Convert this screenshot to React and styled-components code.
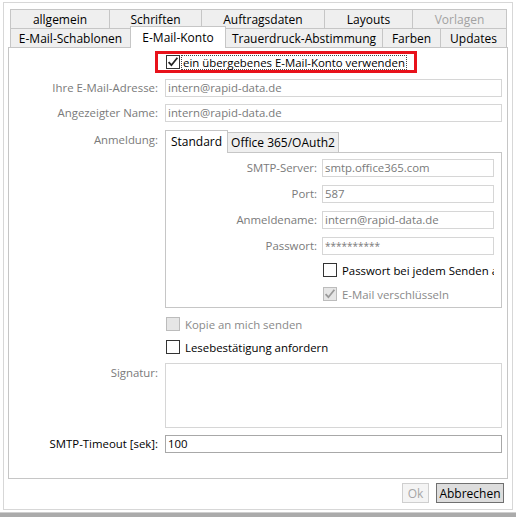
import React from 'react';
import styled, { createGlobalStyle } from 'styled-components';

const Global = createGlobalStyle`
  html, body { margin: 0; padding: 0; background: #fff; }
  body { font-family: "Open Sans", "Noto Sans", sans-serif; font-size: 11.4px; color: #000; }
  #root { width: 516px; height: 517px; }
  * { box-sizing: border-box; }
`;

const Page = styled.div`
  width: 516px;
  height: 517px;
  display: flex;
  flex-direction: column;
  overflow: hidden;
  background: #fff;
`;

const Frame = styled.div`
  margin: 2px 3px 0;
  height: 508px;
  border: 1px solid #d7d7d7;
  padding: 6px 4px 0;
  display: flex;
  flex-direction: column;
`;

const BottomBar = styled.div`
  margin-top: 2px;
  height: 5px;
  background: #ababab;
  border-top: 1px solid #cfcfcf;
`;

const TabHeaders = styled.div`
  padding: 0 1px 0 2px;
  display: flex;
  flex-direction: column;
`;

const TabRow = styled.div`
  display: flex;
  align-items: flex-start;
  height: 19px;
`;

const Tab = styled.div`
  width: ${(p) => p.$w}px;
  height: ${(p) => (p.$selected ? 22 : 19)}px;
  margin-top: ${(p) => (p.$selected ? -2 : 0)}px;
  margin-left: ${(p) => (p.$selected ? -1 : 0)}px;
  border-top: 1px solid #c6c6c6;
  border-right: 1px solid #c6c6c6;
  border-left: ${(p) => (p.$first || p.$selected ? '1px solid #c6c6c6' : 'none')};
  background: ${(p) => (p.$selected ? '#fff' : '#efefef')};
  color: ${(p) => (p.$disabled ? '#a2a2a2' : '#000')};
  position: ${(p) => (p.$selected ? 'relative' : 'static')};
  z-index: ${(p) => (p.$selected ? 1 : 'auto')};
  display: flex;
  align-items: center;
  justify-content: center;
  padding-bottom: ${(p) => (p.$selected ? 1 : 0)}px;
  white-space: nowrap;
  font-size: 12px;
`;

const Panel = styled.div`
  height: 432px;
  border: 1px solid #c6c6c6;
  padding: 0 5px 0 0;
  display: flex;
  flex-direction: column;
`;

const Row = styled.div`
  display: grid;
  grid-template-columns: 149px 1fr;
  column-gap: 7px;
  align-items: ${(p) => (p.$top ? 'start' : 'center')};
  margin-top: ${(p) => p.$mt || 0}px;
`;

const Label = styled.div`
  text-align: right;
  white-space: nowrap;
  color: ${(p) => (p.$dark ? '#000' : '#7a7a7a')};
  padding-top: ${(p) => p.$pt || 0}px;
  line-height: 16px;
`;

const Input = styled.div`
  height: ${(p) => p.$h || 18}px;
  border: 1px solid ${(p) => (p.$active ? '#a8a8a8' : '#d6d6d6')};
  background: #fff;
  color: ${(p) => (p.$active ? '#000' : '#7a7a7a')};
  padding: 0 2px;
  line-height: 16px;
  white-space: nowrap;
  overflow: hidden;
  font-size: ${(p) => (p.$small ? 10 : 11.4)}px;
`;

const Highlight = styled.div`
  justify-self: start;
  margin-left: -10px;
  height: 22px;
  border: 3px solid #e8121b;
  padding: 0 7px 0 8px;
  display: flex;
  align-items: center;
`;

const FocusText = styled.span`
  margin-left: 1px;
  border: 1px dotted #444;
  padding: 0 1px;
  line-height: 13px;
  white-space: nowrap;
`;

const Box = styled.span`
  width: 14px;
  height: 14px;
  flex: none;
  margin-left: ${(p) => p.$ml || 0}px;
  border: 1px solid ${(p) => (p.$disabled ? '#bcbcbc' : '#333')};
  background: ${(p) => (p.$disabled ? '#e6e6e6' : '#fff')};
  display: flex;
  align-items: center;
  justify-content: center;
`;

const CheckRow = styled.div`
  height: 18px;
  display: flex;
  align-items: center;
  gap: 5px;
  overflow: hidden;
  white-space: nowrap;
  color: ${(p) => (p.$disabled ? '#8a8a8a' : '#000')};
  margin-top: ${(p) => p.$mt || 0}px;
`;

const InnerTabs = styled.div`
  display: flex;
  flex-direction: column;
`;

const InnerHeader = styled.div`
  display: flex;
  align-items: flex-end;
  height: 22px;
`;

const InnerTab = styled.div`
  width: ${(p) => p.$w}px;
  height: ${(p) => (p.$selected ? 23 : 20)}px;
  margin-bottom: ${(p) => (p.$selected ? -1 : 0)}px;
  border-top: 1px solid #c6c6c6;
  border-right: 1px solid #c6c6c6;
  border-left: ${(p) => (p.$selected ? '1px solid #c6c6c6' : 'none')};
  background: ${(p) => (p.$selected ? '#fff' : '#efefef')};
  position: ${(p) => (p.$selected ? 'relative' : 'static')};
  z-index: ${(p) => (p.$selected ? 1 : 'auto')};
  display: flex;
  align-items: center;
  justify-content: center;
  padding-bottom: ${(p) => (p.$selected ? 2 : 0)}px;
  white-space: nowrap;
  font-size: 12px;
`;

const InnerPanel = styled.div`
  height: 156px;
  border: 1px solid #c6c6c6;
  padding: 6px 7px 0 0;
  display: flex;
  flex-direction: column;
`;

const InnerRow = styled.div`
  display: grid;
  grid-template-columns: 151px 1fr;
  column-gap: 5px;
  align-items: center;
  margin-top: ${(p) => p.$mt || 0}px;
  min-width: 0;
`;

const ButtonBar = styled.div`
  display: flex;
  justify-content: flex-end;
  gap: 7px;
  margin-top: 4px;
  padding-right: 4px;
`;

const Button = styled.div`
  width: ${(p) => p.$w}px;
  height: 20px;
  border: 1px solid ${(p) => (p.$disabled ? '#cfcfcf' : '#707070')};
  background: ${(p) => (p.$disabled ? '#f4f4f4' : '#dddddd')};
  color: ${(p) => (p.$disabled ? '#a6a6a6' : '#000')};
  display: flex;
  align-items: center;
  justify-content: center;
  font-size: 12px;
`;

const Check = ({ color = '#000' }) => (
  <svg width="12" height="12" viewBox="0 0 12 12">
    <path d="M1.6 6.2 L4.4 9.2 L10.4 1.8" fill="none" stroke={color} strokeWidth="1.8" />
  </svg>
);

const CheckBox = ({ checked, disabled, ml }) => (
  <Box $disabled={disabled} $ml={ml}>
    {checked && <Check color={disabled ? '#9a9a9a' : '#222'} />}
  </Box>
);

const row1 = [
  { t: 'allgemein', w: 100 },
  { t: 'Schriften', w: 92 },
  { t: 'Auftragsdaten', w: 123 },
  { t: 'Layouts', w: 88 },
  { t: 'Vorlagen', w: 94, disabled: true },
];
const row2 = [
  { t: 'E-Mail-Schablonen', w: 121 },
  { t: 'E-Mail-Konto', w: 96, selected: true },
  { t: 'Trauerdruck-Abstimmung', w: 157 },
  { t: 'Farben', w: 58 },
  { t: 'Updates', w: 66 },
];

export default function App() {
  return (
    <Page>
      <Global />
      <Frame>
        <TabHeaders>
          <TabRow>
            {row1.map((t, i) => (
              <Tab key={t.t} $w={t.w} $first={i === 0} $disabled={t.disabled}>
                {t.t}
              </Tab>
            ))}
          </TabRow>
          <TabRow>
            {row2.map((t, i) => (
              <Tab key={t.t} $w={t.w} $first={i === 0} $selected={t.selected}>
                {t.t}
              </Tab>
            ))}
          </TabRow>
        </TabHeaders>
        <Panel>
          <Row $mt={3}>
            <div />
            <Highlight>
              <CheckBox checked />
              <FocusText>ein übergebenes E-Mail-Konto verwenden</FocusText>
            </Highlight>
          </Row>
          <Row $mt={6}>
            <Label>Ihre E-Mail-Adresse:</Label>
            <Input>intern@rapid-data.de</Input>
          </Row>
          <Row $mt={7}>
            <Label>Angezeigter Name:</Label>
            <Input>intern@rapid-data.de</Input>
          </Row>
          <Row $mt={8} $top>
            <Label $pt={2}>Anmeldung:</Label>
            <InnerTabs>
              <InnerHeader>
                <InnerTab $w={63} $selected>Standard</InnerTab>
                <InnerTab $w={111}>Office 365/OAuth2</InnerTab>
              </InnerHeader>
              <InnerPanel>
                <InnerRow>
                  <Label>SMTP-Server:</Label>
                  <Input>smtp.office365.com</Input>
                </InnerRow>
                <InnerRow $mt={8}>
                  <Label>Port:</Label>
                  <Input>587</Input>
                </InnerRow>
                <InnerRow $mt={8}>
                  <Label>Anmeldename:</Label>
                  <Input>intern@rapid-data.de</Input>
                </InnerRow>
                <InnerRow $mt={8}>
                  <Label>Passwort:</Label>
                  <Input $small>**********</Input>
                </InnerRow>
                <InnerRow $mt={6}>
                  <div />
                  <CheckRow>
                    <CheckBox ml={1} />
                    Passwort bei jedem Senden abfragen
                  </CheckRow>
                </InnerRow>
                <InnerRow $mt={6}>
                  <div />
                  <CheckRow $disabled>
                    <CheckBox ml={1} checked disabled />
                    E-Mail verschlüsseln
                  </CheckRow>
                </InnerRow>
              </InnerPanel>
            </InnerTabs>
          </Row>
          <Row $mt={7}>
            <div />
            <CheckRow $disabled>
              <CheckBox ml={1} disabled />
              Kopie an mich senden
            </CheckRow>
          </Row>
          <Row $mt={5}>
            <div />
            <CheckRow>
              <CheckBox ml={1} />
              Lesebestätigung anfordern
            </CheckRow>
          </Row>
          <Row $mt={7} $top>
            <Label $pt={2}>Signatur:</Label>
            <Input $h={65} />
          </Row>
          <Row $mt={7}>
            <Label $dark>SMTP-Timeout [sek]:</Label>
            <Input $active>100</Input>
          </Row>
        </Panel>
        <ButtonBar>
          <Button $w={27} $disabled>Ok</Button>
          <Button $w={68}>Abbrechen</Button>
        </ButtonBar>
      </Frame>
      <BottomBar />
    </Page>
  );
}
